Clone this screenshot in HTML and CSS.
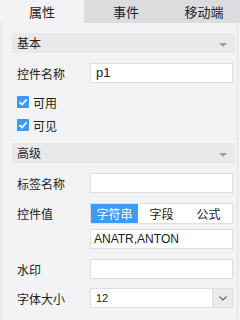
FILE: index.html
```html
<!DOCTYPE html>
<html lang="zh-CN">
<head>
<meta charset="UTF-8">
<meta name="viewport" content="width=device-width, initial-scale=1.0">
<title>属性面板</title>
<link rel="stylesheet" href="styles.css">
</head>
<body>

<div class="tabs">
    <div class="tab active">属性</div>
    <div class="tab">事件</div>
    <div class="tab">移动端</div>
</div>

<div class="panel">
    <div class="section-head">基本<span class="caret"></span></div>

    <div class="row first">
        <span class="label">控件名称</span>
        <div class="input">p1</div>
    </div>
    <div class="check-row first-check">
        <svg class="check" width="12" height="12" viewBox="0 0 12 12"><rect width="12" height="12" rx="1" fill="#3d9af5"/><path d="M2.5 6.2 L5 8.6 L9.6 3.4" stroke="#fff" stroke-width="1.6" fill="none"/></svg>
        <span>可用</span>
    </div>
    <div class="check-row">
        <svg class="check" width="12" height="12" viewBox="0 0 12 12"><rect width="12" height="12" rx="1" fill="#3d9af5"/><path d="M2.5 6.2 L5 8.6 L9.6 3.4" stroke="#fff" stroke-width="1.6" fill="none"/></svg>
        <span>可见</span>
    </div>

    <div class="section-head second">高级<span class="caret"></span></div>

    <div class="row first">
        <span class="label">标签名称</span>
        <div class="input"></div>
    </div>
    <div class="row top">
        <span class="label">控件值</span>
        <div class="field">
            <div class="segmented">
                <div class="seg active">字符串</div>
                <div class="seg">字段</div>
                <div class="seg">公式</div>
            </div>
            <div class="input value">ANATR,ANTON</div>
        </div>
    </div>
    <div class="row">
        <span class="label">水印</span>
        <div class="input"></div>
    </div>
    <div class="row last">
        <span class="label">字体大小</span>
        <div class="select">
            <span class="select-text">12</span>
            <span class="select-btn"><svg width="8" height="5" viewBox="0 0 8 5"><path d="M0.5 0.5 L4 4 L7.5 0.5" stroke="#666" stroke-width="1.1" fill="none"/></svg></span>
        </div>
    </div>
</div>

</body>
</html>
```
FILE: styles.css
```css
body {
    margin: 0;
    background-color: #f3f3f5;
    color: #333;
    font-family: "Noto Sans CJK SC", "Liberation Sans", sans-serif;
    font-size: 12px;
}

.tabs {
    display: flex;
    height: 23px;
    background-color: #dcdcdf;
}

.tab {
    width: 84px;
    line-height: 23px;
    text-align: center;
    font-size: 13px;
    color: #222;
}

.tab:last-child {
    width: 72px;
}

.tab.active {
    background-color: #f3f3f5;
}

.panel {
    margin-right: 2px;
    height: 297px;
    padding: 10px 2px 0 10px;
    border-left: 2px solid #e7e7e9;
    border-right: 1px solid #e2e2e4;
}

.section-head {
    position: relative;
    height: 20px;
    line-height: 20px;
    padding-left: 5px;
    background-color: #e9e9eb;
    color: #222;
}

.section-head.second {
    margin-top: 10px;
}

.caret {
    position: absolute;
    right: 8px;
    top: 10px;
    width: 0;
    height: 0;
    border-left: 4px solid transparent;
    border-right: 4px solid transparent;
    border-top: 4px solid #a0a0a0;
}

.row {
    display: flex;
    align-items: center;
    margin-top: 10px;
    padding: 0 2px 0 5px;
}

.row.last {
    margin-top: 9px;
}

.row.top {
    align-items: flex-start;
}

.row.top .label {
    line-height: 21px;
}

.label {
    width: 73px;
    color: #222;
}

.input {
    flex: 1;
    height: 18px;
    line-height: 18px;
    padding-left: 5px;
    background-color: #fff;
    border: 1px solid #dedede;
    font-family: "Liberation Sans", sans-serif;
    font-size: 13px;
    color: #1a1a2e;
}

.field {
    flex: 1;
}

.segmented {
    display: flex;
    height: 19px;
    border: 1px solid #e0e0e0;
    background-color: #fff;
}

.seg {
    width: 47px;
    line-height: 19px;
    text-align: center;
    color: #222;
}

.seg.active {
    background-color: #3d9af5;
    color: #fff;
}

.input.value {
    margin-top: 5px;
    font-size: 12px;
    padding-left: 3px;
}

.select {
    flex: 1;
    display: flex;
    height: 18px;
    background-color: #fff;
    border: 1px solid #dedede;
}

.select-text {
    flex: 1;
    line-height: 18px;
    padding-left: 5px;
    font-family: "Liberation Sans", sans-serif;
    font-size: 11px;
    color: #1a1a2e;
}

.select-btn {
    width: 19px;
    display: flex;
    align-items: center;
    justify-content: center;
    background-color: #ebebeb;
    border-left: 1px solid #dedede;
}

.check-row {
    display: flex;
    align-items: center;
    height: 16px;
    margin-top: 7px;
    padding-left: 5px;
    color: #222;
}

.check-row.first-check {
    margin-top: 11px;
}

.check {
    margin-right: 4px;
}
```
